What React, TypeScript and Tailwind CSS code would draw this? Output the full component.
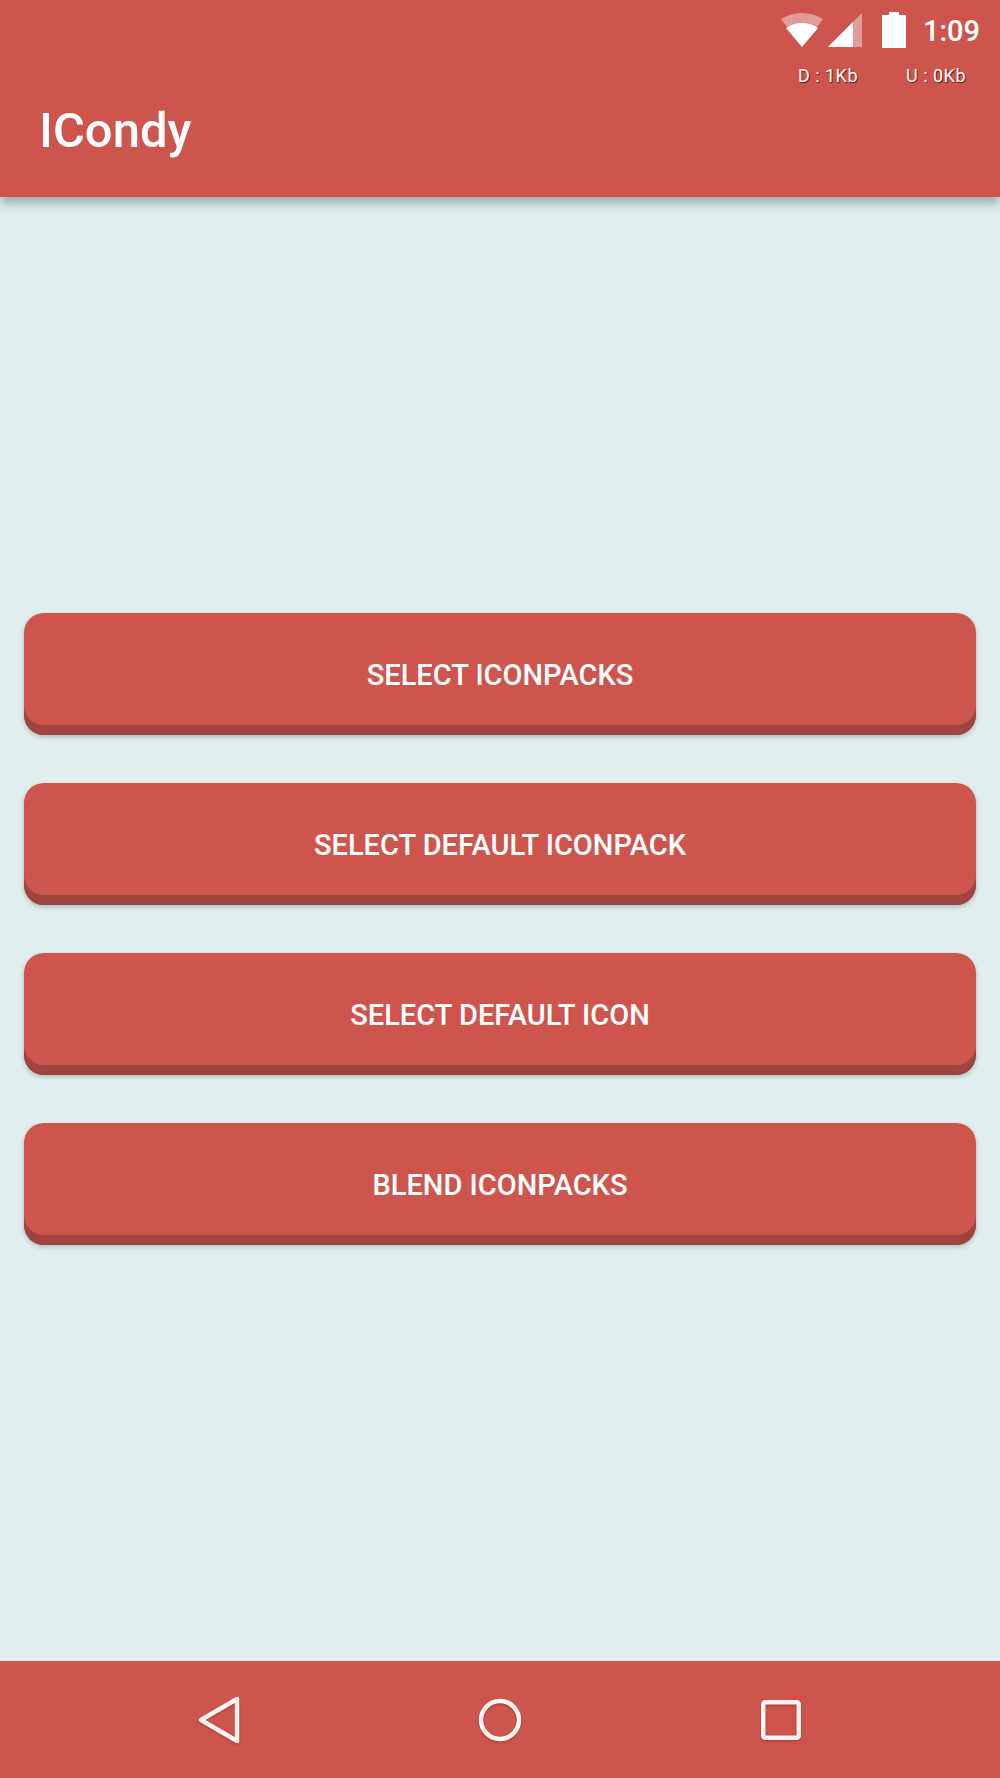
export default function App() {
  const labels = ["SELECT ICONPACKS", "SELECT DEFAULT ICONPACK", "SELECT DEFAULT ICON", "BLEND ICONPACKS"];
  return (
    <div className="flex h-[1778px] w-[1000px] flex-col overflow-hidden bg-[#e0eeed] font-['Roboto',sans-serif] text-white">
      <header className="relative z-10 h-[197px] shrink-0 bg-[#cd554e] shadow-[0_6px_10px_rgba(60,90,90,0.45)]">
        <div className="flex h-[60px] items-start justify-end pr-[20px] pt-[12px]">
          <svg width="42" height="36" viewBox="0 0 42 36" className="mt-[1px]">
            <path d="M0 6 A39.75 39.75 0 0 1 42 6 L21 34 Z" fill="#fff" fillOpacity="0.42" />
            <path d="M5 15 A28 28 0 0 1 37 15 L21 34 Z" fill="#fff" />
          </svg>
          <svg width="34" height="35" viewBox="0 0 34 35" className="ml-[5px] mt-[1px]">
            <path d="M0 34 L34 0 V34 Z" fill="#fff" fillOpacity="0.42" />
            <path d="M0 34 L25 9 V34 Z" fill="#fff" />
          </svg>
          <svg width="24" height="36" viewBox="0 0 24 36" className="ml-[20px]">
            <path d="M7 0 H17 V3 H24 V36 H0 V3 H7 Z" fill="#fff" />
          </svg>
          <span className="ml-[17px] text-[29px] leading-[38px] font-medium">1:09</span>
        </div>
        <div className="flex h-[28px] justify-end gap-[48px] pr-[34px] pt-[2px] text-[18px] leading-[28px] tracking-[0.5px] [text-shadow:1px_1px_1px_rgba(60,0,0,0.7)]">
          <span>D : 1Kb</span>
          <span>U : 0Kb</span>
        </div>
        <div className="pl-[39px] pt-[14px] text-[49px] leading-[58px] font-medium">ICondy</div>
      </header>
      <main className="flex flex-1 flex-col justify-start gap-[48px] px-[24px] pt-[416px]">
        {labels.map((label) => (
          <button
            key={label}
            className="flex h-[122px] w-full items-center justify-center rounded-[20px] bg-[#cd554e] pt-[4px] text-[29px] font-medium shadow-[inset_0_-10px_0_#a1443f,0_2px_4px_rgba(70,100,100,0.35)]"
          >
            {label}
          </button>
        ))}
      </main>
      <nav className="flex h-[117px] shrink-0 items-center bg-[#cd554e]">
        <div className="flex w-full items-center justify-between pl-[198px] pr-[199px]">
          <svg width="44" height="48" viewBox="0 0 44 48" className="drop-shadow-[0_1px_1px_rgba(80,0,0,0.35)]">
            <path d="M39 3 L3 24 L39 45 Z" fill="none" stroke="#fff3f0" strokeWidth="4.5" strokeLinejoin="round" />
          </svg>
          <svg width="44" height="44" viewBox="0 0 44 44" className="-ml-[3px] drop-shadow-[0_1px_1px_rgba(80,0,0,0.35)]">
            <circle cx="22" cy="22" r="19" fill="none" stroke="#fff3f0" strokeWidth="4.5" />
          </svg>
          <svg width="40" height="40" viewBox="0 0 40 40" className="drop-shadow-[0_1px_1px_rgba(80,0,0,0.35)]">
            <rect x="2.25" y="2.25" width="35.5" height="35.5" rx="2" fill="none" stroke="#fff3f0" strokeWidth="4.5" />
          </svg>
        </div>
      </nav>
    </div>
  );
}
